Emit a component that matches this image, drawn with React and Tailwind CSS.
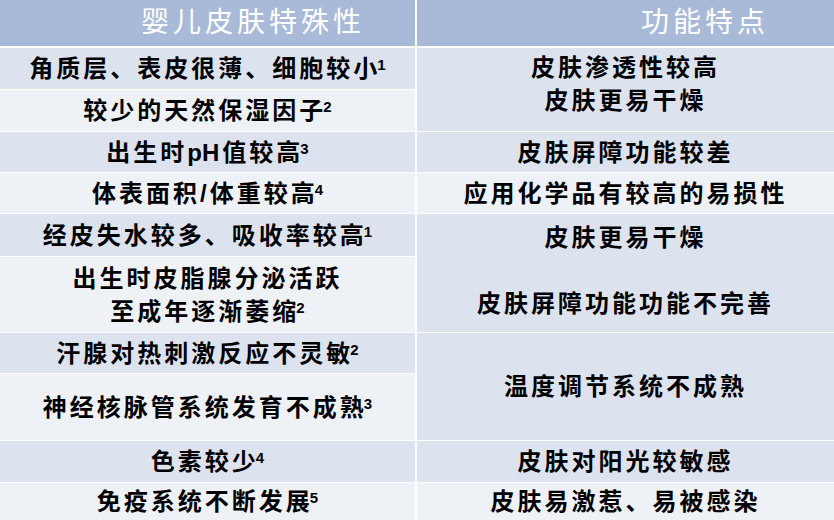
const font = { fontFamily: '"Liberation Sans", "Noto Sans CJK SC", sans-serif' }

const DARK = 'bg-[#dde3ee]'
const LIGHT = 'bg-[#eef1f6]'

// left column: one cell per grid row
const left = [
  { lines: ['角质层、表皮很薄、细胞较小'], sup: '1', bg: DARK, pos: 'row-start-1' },
  { lines: ['较少的天然保湿因子'], sup: '2', bg: LIGHT, pos: 'row-start-2' },
  { lines: ['出生时pH值较高'], sup: '3', bg: DARK, pos: 'row-start-3' },
  { lines: ['体表面积/体重较高'], sup: '4', bg: LIGHT, pos: 'row-start-4' },
  { lines: ['经皮失水较多、吸收率较高'], sup: '1', bg: DARK, pos: 'row-start-5' },
  { lines: ['出生时皮脂腺分泌活跃', '至成年逐渐萎缩'], sup: '2', bg: LIGHT, pos: 'row-start-6' },
  { lines: ['汗腺对热刺激反应不灵敏'], sup: '2', bg: DARK, pos: 'row-start-7' },
  { lines: ['神经核脉管系统发育不成熟'], sup: '3', bg: LIGHT, pos: 'row-start-8' },
  { lines: ['色素较少'], sup: '4', bg: DARK, pos: 'row-start-9' },
  { lines: ['免疫系统不断发展'], sup: '5', bg: LIGHT, pos: 'row-start-10' },
]

// right column: merged cells span several rows
const right = [
  { lines: ['皮肤渗透性较高', '皮肤更易干燥'], bg: DARK, pos: 'row-start-1 row-span-2 pb-[11px]' },
  { lines: ['皮肤屏障功能较差'], bg: DARK, pos: 'row-start-3' },
  { lines: ['应用化学品有较高的易损性'], bg: LIGHT, pos: 'row-start-4' },
  { lines: ['皮肤更易干燥', '\u00a0', '皮肤屏障功能功能不完善'], bg: DARK, pos: 'row-start-5 row-span-2 pb-[6px]' },
  { lines: ['温度调节系统不成熟'], bg: DARK, pos: 'row-start-7 row-span-2' },
  { lines: ['皮肤对阳光较敏感'], bg: DARK, pos: 'row-start-9' },
  { lines: ['皮肤易激惹、易被感染'], bg: LIGHT, pos: 'row-start-10' },
]

// last glyph without the trailing letter-spacing so the footnote sits tight
function Line({ text, sup }) {
  if (!sup) return <div>{text}</div>
  const head = text.slice(0, -1)
  const last = text.slice(-1)
  const parts = head.split('pH')
  return (
    <div>
      {parts.length > 1 ? (
        <>
          {parts[0]}
          <span className="tracking-normal mr-[3px]">pH</span>
          {parts[1]}
        </>
      ) : (
        head
      )}
      <span className="tracking-normal">{last}</span>
      <sup className="text-[15px] font-bold tracking-normal top-[-7px]">{sup}</sup>
    </div>
  )
}

export default function App() {
  return (
    <div className="w-[834px] h-[520px] bg-white overflow-hidden text-black" style={font}>
      {/* header */}
      <div className="grid grid-cols-[415px_1fr] gap-x-[2px] h-[46px] mb-[2px]">
        <div className="bg-[#a9bad8] flex items-center pl-[141px] text-white text-[28px] tracking-[4px]">
          婴儿皮肤特殊性
        </div>
        <div className="bg-[#a9bad8] flex items-center pl-[224px] text-white text-[28px] tracking-[4px]">
          功能特点
        </div>
      </div>

      {/* body */}
      <div className="grid grid-cols-[415px_1fr] grid-rows-[41px_41px_40px_40px_42px_75px_40px_66px_41px_37px] gap-x-[2px] gap-y-[1px] text-[24px] font-bold tracking-[3px] leading-[33px]">
        {left.map((c, i) => (
          <div key={i} className={`col-start-1 ${c.pos} ${c.bg} flex flex-col items-center justify-center text-center`}>
            {c.lines.map((l, j) => (
              <Line key={j} text={l} sup={j === c.lines.length - 1 ? c.sup : null} />
            ))}
          </div>
        ))}
        {right.map((c, i) => (
          <div key={i} className={`col-start-2 ${c.pos} ${c.bg} flex flex-col items-center justify-center text-center`}>
            {c.lines.map((l, j) => (
              <Line key={j} text={l} />
            ))}
          </div>
        ))}
      </div>
    </div>
  )
}
